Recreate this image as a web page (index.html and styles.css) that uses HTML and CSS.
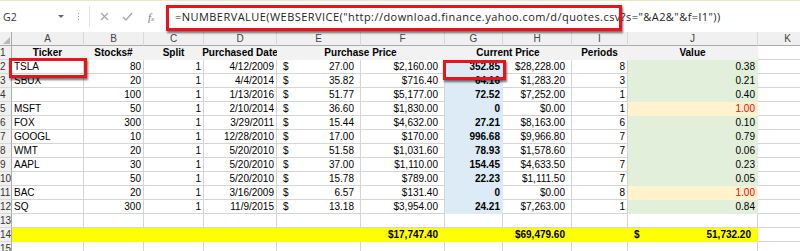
FILE: index.html
```html
<!DOCTYPE html>
<html>
<head>
<meta charset="utf-8">
<link rel="stylesheet" href="styles.css">
</head>
<body>
<div class="app">
  <div class="fbar">
    <div class="namebox"><span>G2</span><span class="caret"></span></div>
    <div class="grip"><i></i><i></i><i></i></div>
    <div class="btns">
      <svg class="ico" width="9" height="9" viewBox="0 0 9 9"><path d="M1 1L8 8M8 1L1 8" stroke="#a6a6a6" stroke-width="1.2" fill="none"/></svg>
      <svg class="ico" width="11" height="9" viewBox="0 0 11 9"><path d="M1 5L4 8L10 1" stroke="#a6a6a6" stroke-width="1.2" fill="none"/></svg>
      <span class="fx"><i>f</i><small>x</small></span>
    </div>
    <div class="formula">=NUMBERVALUE(WEBSERVICE("http://download.finance.yahoo.com/d/quotes.csv?s="&amp;A2&amp;"&amp;f=l1"))</div>
  </div>

  <div class="sheet">
    <!-- column headers -->
    <div class="ch corner"><span class="tri"></span></div>
    <div class="ch">A</div><div class="ch">B</div><div class="ch">C</div><div class="ch">D</div><div class="ch">E</div><div class="ch">F</div><div class="ch">G</div><div class="ch">H</div><div class="ch">I</div><div class="ch">J</div><div class="ch">K</div>

    <!-- row 1 -->
    <div class="rh">1</div>
    <div class="c gray b ctr">Ticker</div>
    <div class="c gray b ctr">Stocks#</div>
    <div class="c gray b ctr">Split</div>
    <div class="c gray b ctr">Purchased Date</div>
    <div class="c gray b ctr span2">Purchase Price</div>
    <div class="c gray b ctr span2">Current Price</div>
    <div class="c gray b ctr">Periods</div>
    <div class="c gray b ctr">Value</div>
    <div class="c"></div>

    <!-- row 2 -->
    <div class="rh">2</div>
    <div class="c">TSLA</div><div class="c r">80</div><div class="c r">1</div><div class="c r">4/12/2009</div>
    <div class="c acc"><span>$</span><span>27.00</span></div><div class="c r cur">$2,160.00</div>
    <div class="c r b blue">352.85</div><div class="c r cur">$28,228.00</div><div class="c r">8</div><div class="c r green">0.38</div><div class="c"></div>

    <!-- row 3 -->
    <div class="rh">3</div>
    <div class="c">SBUX</div><div class="c r">20</div><div class="c r">1</div><div class="c r">4/4/2014</div>
    <div class="c acc"><span>$</span><span>35.82</span></div><div class="c r cur">$716.40</div>
    <div class="c r b blue">64.16</div><div class="c r cur">$1,283.20</div><div class="c r">3</div><div class="c r green">0.21</div><div class="c"></div>

    <!-- row 4 -->
    <div class="rh">4</div>
    <div class="c"></div><div class="c r">100</div><div class="c r">1</div><div class="c r">1/13/2016</div>
    <div class="c acc"><span>$</span><span>51.77</span></div><div class="c r cur">$5,177.00</div>
    <div class="c r b blue">72.52</div><div class="c r cur">$7,252.00</div><div class="c r">1</div><div class="c r green">0.40</div><div class="c"></div>

    <!-- row 5 -->
    <div class="rh">5</div>
    <div class="c">MSFT</div><div class="c r">50</div><div class="c r">1</div><div class="c r">2/10/2014</div>
    <div class="c acc"><span>$</span><span>36.60</span></div><div class="c r cur">$1,830.00</div>
    <div class="c r b blue">0</div><div class="c r cur">$0.00</div><div class="c r">1</div><div class="c r warn">1.00</div><div class="c"></div>

    <!-- row 6 -->
    <div class="rh">6</div>
    <div class="c">FOX</div><div class="c r">300</div><div class="c r">1</div><div class="c r">3/29/2011</div>
    <div class="c acc"><span>$</span><span>15.44</span></div><div class="c r cur">$4,632.00</div>
    <div class="c r b blue">27.21</div><div class="c r cur">$8,163.00</div><div class="c r">6</div><div class="c r green">0.10</div><div class="c"></div>

    <!-- row 7 -->
    <div class="rh">7</div>
    <div class="c">GOOGL</div><div class="c r">10</div><div class="c r">1</div><div class="c r">12/28/2010</div>
    <div class="c acc"><span>$</span><span>17.00</span></div><div class="c r cur">$170.00</div>
    <div class="c r b blue">996.68</div><div class="c r cur">$9,966.80</div><div class="c r">7</div><div class="c r green">0.79</div><div class="c"></div>

    <!-- row 8 -->
    <div class="rh">8</div>
    <div class="c">WMT</div><div class="c r">20</div><div class="c r">1</div><div class="c r">5/20/2010</div>
    <div class="c acc"><span>$</span><span>51.58</span></div><div class="c r cur">$1,031.60</div>
    <div class="c r b blue">78.93</div><div class="c r cur">$1,578.60</div><div class="c r">7</div><div class="c r green">0.06</div><div class="c"></div>

    <!-- row 9 -->
    <div class="rh">9</div>
    <div class="c">AAPL</div><div class="c r">30</div><div class="c r">1</div><div class="c r">5/20/2010</div>
    <div class="c acc"><span>$</span><span>37.00</span></div><div class="c r cur">$1,110.00</div>
    <div class="c r b blue">154.45</div><div class="c r cur">$4,633.50</div><div class="c r">7</div><div class="c r green">0.23</div><div class="c"></div>

    <!-- row 10 -->
    <div class="rh">10</div>
    <div class="c"></div><div class="c r">50</div><div class="c r">1</div><div class="c r">5/20/2010</div>
    <div class="c acc"><span>$</span><span>15.78</span></div><div class="c r cur">$789.00</div>
    <div class="c r b blue">22.23</div><div class="c r cur">$1,111.50</div><div class="c r">7</div><div class="c r green">0.05</div><div class="c"></div>

    <!-- row 11 -->
    <div class="rh">11</div>
    <div class="c">BAC</div><div class="c r">20</div><div class="c r">1</div><div class="c r">3/16/2009</div>
    <div class="c acc"><span>$</span><span>6.57</span></div><div class="c r cur">$131.40</div>
    <div class="c r b blue">0</div><div class="c r cur">$0.00</div><div class="c r">8</div><div class="c r warn">1.00</div><div class="c"></div>

    <!-- row 12 -->
    <div class="rh">12</div>
    <div class="c">SQ</div><div class="c r">300</div><div class="c r">1</div><div class="c r">11/9/2015</div>
    <div class="c acc"><span>$</span><span>13.18</span></div><div class="c r cur">$3,954.00</div>
    <div class="c r b blue">24.21</div><div class="c r cur">$7,263.00</div><div class="c r">1</div><div class="c r green">0.84</div><div class="c"></div>

    <!-- row 13 -->
    <div class="rh">13</div>
    <div class="c"></div><div class="c"></div><div class="c"></div><div class="c"></div><div class="c"></div><div class="c"></div><div class="c"></div><div class="c"></div><div class="c"></div><div class="c"></div><div class="c"></div>

    <!-- row 14 -->
    <div class="rh">14</div>
    <div class="c yl"></div><div class="c yl"></div><div class="c yl"></div><div class="c yl"></div><div class="c yl"></div>
    <div class="c yl r b cur">$17,747.40</div><div class="c yl"></div>
    <div class="c yl r b cur">$69,479.60</div><div class="c yl"></div>
    <div class="c yl acc b"><span>$</span><span>51,732.20</span></div><div class="c"></div>

    <!-- row 15 -->
    <div class="rh">15</div>
    <div class="c"></div><div class="c"></div><div class="c"></div><div class="c"></div><div class="c"></div><div class="c"></div><div class="c"></div><div class="c"></div><div class="c"></div><div class="c"></div><div class="c"></div>
  </div>

  <div class="mark mark-formula"></div>
  <div class="mark mark-a2"></div>
  <div class="mark mark-g2"></div>
</div>
</body>
</html>
```

FILE: styles.css
```css
html, body {
  margin: 0;
  padding: 0;
  background: #ffffff;
  overflow: hidden;
}

.app {
  position: relative;
  width: 800px;
  height: 251px;
  overflow: hidden;
  border-top: 1px solid #ece6c8;
  box-sizing: border-box;
  font-family: "Liberation Sans", Arial, sans-serif;
}

/* ---------- formula bar ---------- */
.fbar {
  display: flex;
  align-items: center;
  height: 31px;
  background: #ffffff;
}

.namebox {
  width: 68px;
  height: 21px;
  box-sizing: border-box;
  display: flex;
  align-items: center;
  justify-content: space-between;
  padding: 0 4px 0 3px;
  font-family: "Open Sans", "Liberation Sans", sans-serif;
  font-size: 10.5px;
  color: #333;
  background: #fff;
}

.caret {
  width: 0;
  height: 0;
  border-left: 3px solid transparent;
  border-right: 3px solid transparent;
  border-top: 3px solid #666;
}

.grip {
  width: 21px;
  display: flex;
  flex-direction: column;
  align-items: center;
  gap: 2px;
}

.grip i {
  display: block;
  width: 1px;
  height: 1px;
  background: #9a9a9a;
}

.btns {
  width: 77px;
  height: 21px;
  box-sizing: border-box;
  border-left: 1px solid #e2e2e2;
  display: flex;
  align-items: center;
  padding-left: 10px;
  gap: 13px;
}

.fx {
  font-family: "Liberation Serif", serif;
  color: #7a7a7a;
  font-size: 11px;
  margin-left: 2px;
}

.fx small {
  font-size: 7px;
  font-style: italic;
}

.formula {
  flex: 1;
  height: 21px;
  line-height: 21px;
  padding-left: 9px;
  font-family: "Open Sans", "Liberation Sans", sans-serif;
  font-size: 11px;
  letter-spacing: 0.45px;
  color: #222;
  white-space: nowrap;
  overflow: hidden;
}

/* ---------- sheet grid ---------- */
.sheet {
  display: grid;
  grid-template-columns: 12px 72px 60px 60px 73px 84px 84px 58px 69px 56px 130px 60px;
  grid-auto-rows: 14px;
  font-family: "Liberation Sans Narrow", "Liberation Sans", Arial, sans-serif;
  font-size: 10px;
  color: #000;
}

.ch {
  background: #f0f0f0;
  color: #444;
  font-size: 10px;
  font-family: "Liberation Sans", Arial, sans-serif;
  text-align: center;
  line-height: 13px;
  border-right: 1px solid #d9d9d9;
  border-bottom: 1px solid #ababab;
  box-sizing: border-box;
}

.corner {
  position: relative;
  border-right: 1px solid #ababab;
}

.tri {
  position: absolute;
  right: 1px;
  bottom: 1px;
  width: 0;
  height: 0;
  border-left: 7px solid transparent;
  border-bottom: 7px solid #b9b9b9;
}

.rh {
  background: #f0f0f0;
  color: #333;
  font-size: 10px;
  font-family: "Liberation Sans", Arial, sans-serif;
  line-height: 13px;
  padding-left: 0;
  border-right: 1px solid #ababab;
  border-bottom: 1px solid #d9d9d9;
  box-sizing: border-box;
  overflow: hidden;
  white-space: nowrap;
}

.c {
  box-sizing: border-box;
  border-right: 1px solid #d4d4d4;
  border-bottom: 1px solid #d4d4d4;
  padding: 0 2px;
  line-height: 13px;
  white-space: nowrap;
  overflow: hidden;
}

.r { text-align: right; }
.b { font-weight: bold; }
.cur { padding-right: 6px; }

.ctr {
  display: flex;
  justify-content: center;
  padding: 0;
  overflow: visible;
}

.span2 { grid-column: span 2; }

.acc {
  display: flex;
  justify-content: space-between;
  padding: 0 6px 0 6px;
}

.gray {
  background: #f2f2f2;
  border-color: transparent;
}

.blue {
  background: #ddebf7;
  border-color: transparent;
}

.green {
  background: #e2efda;
  border-color: transparent;
}

.warn {
  background: #fff2cc;
  border-color: transparent;
  color: #ff0000;
}

.yl {
  background: #ffff00;
  border-color: transparent;
}

/* ---------- red highlight marks ---------- */
.mark {
  position: absolute;
  box-sizing: border-box;
  border: 3px solid #e8141b;
  box-shadow: 1px 2px 2px rgba(0, 0, 0, 0.55);
}

.mark-formula {
  left: 166px;
  top: 4px;
  width: 456px;
  height: 26px;
}

.mark-a2 {
  left: 9px;
  top: 57px;
  width: 78px;
  height: 20px;
}

.mark-g2 {
  left: 443px;
  top: 59px;
  width: 63px;
  height: 20px;
}
```
